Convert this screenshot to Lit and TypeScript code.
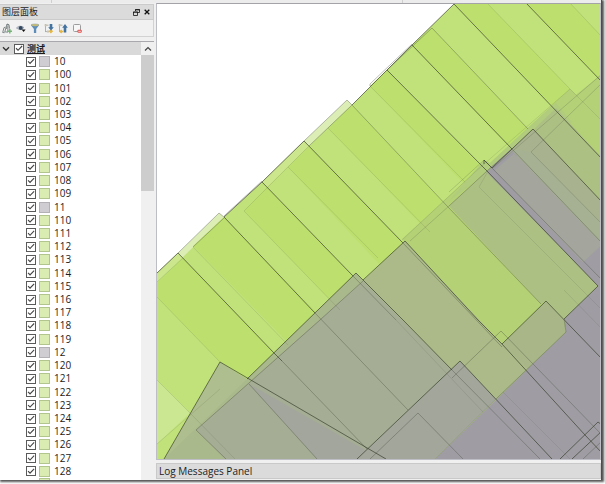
import { LitElement, html, css, svg } from "lit";
import { customElement } from "lit/decorators.js";

const range = (from: number, to: number) =>
  Array.from({ length: to - from + 1 }, (_, i) => String(from + i));

const LAYERS = ["10", ...range(100, 109), "11", ...range(110, 119), "12", ...range(120, 128)];
const isGrey = (name: string) => name.length === 2;

@customElement("layer-panel")
export class LayerPanel extends LitElement {
  static styles = css`
    :host { display: flex; flex-direction: column; min-height: 0; color: #1c1c1c; }
    * { box-sizing: border-box; }
    button { border: 0; padding: 0; margin: 0; background: none; display: flex; color: inherit; }
    svg { display: block; }
    .title {
      display: flex; align-items: center; gap: 4px; height: 16px; padding: 0 3px 0 2px;
      background: #dbdbdb; border: 1px solid #cbcbcb; border-left: 0;
    }
    h2 { margin: 0; flex: 1; font-size: 9px; line-height: 14px; font-weight: 400; }
    .tools {
      display: flex; align-items: center; gap: 4px; height: 17px; padding: 0 2px;
      background: #f1f1f1; border: 1px solid #d2d2d2; border-width: 0 1px 1px 0; margin-bottom: 4px;
    }
    .tree { display: flex; flex: 1; min-height: 0; background: #fff; border-top: 1px solid #a9a9ad; }
    .items { flex: 1; display: flex; flex-direction: column; min-width: 0; }
    .group { display: flex; align-items: center; gap: 4px; height: 13px; padding-left: 2px; background: #d9d9d9; flex: none; }
    .group label { display: flex; align-items: center; gap: 3px; font-size: 9px; line-height: 13px; font-weight: 700; text-decoration: underline; }
    ul { flex: 1; margin: 0; padding: 0; list-style: none; display: flex; flex-direction: column; overflow: hidden; }
    li { flex: 1 0 13px; padding-left: 26px; display: flex; align-items: center; }
    li label { display: flex; align-items: center; font-size: 10px; line-height: 13px; }
    .next { flex: 0 0 2px; align-items: flex-start; overflow: hidden; padding-left: 39px; }
    input {
      appearance: none; margin: 0; width: 10px; height: 10px; flex: none;
      border: 1px solid #5a5a5a; background: #fff; display: grid;
    }
    input:checked::after {
      content: ""; background: #444;
      clip-path: polygon(8% 52%, 18% 42%, 38% 62%, 84% 14%, 94% 24%, 38% 82%);
    }
    .swatch { width: 11px; height: 11px; margin: 0 4px 0 3px; border: 1px solid #b3c58e; background: #dbecb2; flex: none; }
    .swatch.grey { border-color: #b3b1b6; background: #cfcdd2; }
    .next .swatch { margin: 0; }
    .scroll { width: 13px; background: #f0f0f0; display: flex; flex-direction: column; align-items: stretch; }
    .scroll button { height: 13px; align-items: center; justify-content: center; flex: none; }
    .thumb { height: 31%; background: #cdcdcd; }
  `;

  render() {
    return html`
      <div class="title">
        <h2>图层面板</h2>
        <button aria-label="Float">
          <svg width="7" height="7" viewBox="0 0 7 7" fill="none" stroke="#111" stroke-width=".8"><path d="M2.5 2V.5h4v3H5M2 .9h5M.5 3h4v3.5h-4zM0 3.2h5"/></svg>
        </button>
        <button aria-label="Close">
          <svg width="6" height="6" viewBox="0 0 6 6" stroke="#111" stroke-width="1.3"><path d="M.7.7l4.6 4.6M5.3.7L.7 5.3"/></svg>
        </button>
      </div>
      <div class="tools">
        <button aria-label="Add group">
          <svg width="10" height="11" viewBox="0 0 10 11" fill="none"><path d="M.7 9.5L2 4.6l1.3-.4M5 1L2.8 8.8l3 .4L6 2.4 5 1l2 .7.6 4M.7 9.5l2 .2M5 3.4L4.6 6" stroke="#747c7c" stroke-width=".9"/><path d="M7.8 6v4.4M5.6 8.2H10" stroke="#79b27a" stroke-width="1.5"/></svg>
        </button>
        <button aria-label="Visibility">
          <svg width="10" height="11" viewBox="0 0 10 11"><path d="M.4 5Q3.4 1.6 8 4.5 4.8 8.4.4 5z" fill="#b9c4d0" stroke="#88919c" stroke-width=".6"/><circle cx="4.7" cy="5" r="2" fill="#33485f"/><path d="M5.6 6.6h4L7.6 9z" fill="#111"/></svg>
        </button>
        <button aria-label="Filter">
          <svg width="10" height="11" viewBox="0 0 10 11"><path d="M1 2.2h8L6.2 6v4H3.9V6z" fill="#5d8eb9"/><ellipse cx="5" cy="2.1" rx="4" ry="1.1" fill="#d7c36c" stroke="#7893a0" stroke-width=".5"/></svg>
        </button>
        <button aria-label="Expand all">
          <svg width="10" height="11" viewBox="0 0 10 11"><path d="M1.5 1v8M1.5 2.2h3M1.5 8.6h3" stroke="#a0a0a0" stroke-width=".8" fill="none"/><path d="M.6 1.2h2v2h-2zM3 7.6h2v2H3z" fill="#c9c4ad"/><path d="M6.9 6l2.2 2.3-2.2 2.2-2.2-2.2z" fill="#e5b743"/><path d="M5.7 1h2.6v3.3h1.5L7 7.5 4.2 4.3h1.5z" fill="#42729f"/></svg>
        </button>
        <button aria-label="Collapse all">
          <svg width="10" height="11" viewBox="0 0 10 11"><path d="M1.5 1v8M1.5 2.2h3M1.5 8.6h3" stroke="#a0a0a0" stroke-width=".8" fill="none"/><path d="M.6 1.2h2v2h-2z" fill="#c9c4ad"/><path d="M3.2 6.5l2 2-2 2-2-2z" fill="#e5b743"/><path d="M5.7 9.6h2.6V4.8h1.5L7 1 4.2 4.8h1.5z" fill="#42729f"/></svg>
        </button>
        <button aria-label="Remove layer">
          <svg width="10" height="11" viewBox="0 0 10 11"><rect x="1.5" y="1.5" width="7" height="7" rx="1" fill="#f7f7f7" stroke="#9c9c9c"/><rect x="5.4" y="6.8" width="4.4" height="3" rx="1" fill="#e25555"/><path d="M6.3 8.3h2.6" stroke="#fff" stroke-width=".7"/></svg>
        </button>
      </div>
      <div class="tree">
        <div class="items">
          <div class="group">
            <button aria-label="Collapse group">
              <svg width="8" height="6" viewBox="0 0 8 6" fill="none" stroke="#333" stroke-width="1.3"><path d="M1 1.3l3 3 3-3"/></svg>
            </button>
            <label><input type="checkbox" checked />测试</label>
          </div>
          <ul>
            ${LAYERS.map(
              (name) => html`<li>
                <label><input type="checkbox" checked /><span class="swatch ${isGrey(name) ? "grey" : ""}"></span>${name}</label>
              </li>`
            )}
            <li class="next"><span class="swatch"></span></li>
          </ul>
        </div>
        <div class="scroll">
          <button aria-label="Scroll up">
            <svg width="8" height="6" viewBox="0 0 8 6" fill="none" stroke="#444" stroke-width="1.2"><path d="M1 4.5l3-3 3 3"/></svg>
          </button>
          <div class="thumb"></div>
        </div>
      </div>
    `;
  }
}

// [fill, points], painted in order, in map-view coordinates.
const AREAS: [string, string][] = [
  ["#c1e27a", "157,273 178,253 224,217 262,182 304,141 352,105 387,70 412,45 454,4 454,3 602,3 602,459 157,459"],
  ["#dcedb6", "178,253 219,213 224,217 182,258"],
  ["#dcedb6", "304,141 347,100 352,105 309,146"],
  ["#cbe68d", "157,273 178,253 182,258 157,282"],
  ["#cbe68d", "262,182 304,141 309,146 267,187"],
  // darker overlap bands
  ["#bcdf6e", "157,283 183,258 300,379 248,400 220,362 157,297"],
  ["#bcdf6e", "193,246 224,217 340,337 312,367"],
  ["#bcdf6e", "244,211 267,187 362,285 340,310"],
  ["#bcdf6e", "288,167 309,146 403,243 380,265"],
  ["#bcdf6e", "328,128 352,105 452,211 430,234"],
  ["#bcdf6e", "370,86 387,70 487,173 470,190"],
  ["#bcdf6e", "412,45 432,28 532,133 513,151"],
  ["#bcdf6e", "454,4 487,3 575,94 556,110"],
  ["#bcdf6e", "526,3 570,3 602,37 602,82"],
  ["#cbe791", "157,380 190,413 157,444"],
  // green and grey overlaps
  ["#b4d175", "402,239 475,172 484,160 490,163 570,89 576,95 602,74 602,301 546,301 502,344"],
  ["#b0cc7c", "449,201 484,160 490,163 556,102 575,120 487,173"],
  ["#b4d178", "555,102 570,89 576,95 602,74 602,157"],
  ["#adc084", "449,206 487,171 512,150 556,108 602,158 602,290 564,319 546,301 541,304"],
  ["#a8b28f", "486,172 533,129 602,202 602,290"],
  ["#a6b193", "511,149 531,152 602,224 602,244"],
  ["#a4a69d", "490,168 511,149 602,244 583,262"],
  ["#9f9da3", "487,172 493,167 513,152 517,156 495,171 583,262 602,244 602,459 435,459 496,399 566,332 564,319 598,286"],
  ["#a4a69d", "495,170 514,154 602,244 583,262"],
  ["#a9b788", "546,301 564,319 566,332 496,399 452,378 501,345"],
  ["#abba88", "405,241 502,344 528,369 435,459 300,459 300,340"],
  ["#afbe8e", "164,459 220,362 247,379 386,459"],
  ["#aab98b", "356,273 452,370 386,459 164,459 247,379"],
  ["#a5ad94", "363,281 452,370 386,459 225,459 196,430"],
  ["#a3a69c", "249,384 381,459 317,459"],
  ["#a2a69b", "460,361 496,399 435,459 357,459"],
];

const DARK = "rgba(48,54,38,.64)";
const MID = "rgba(70,76,60,.36)";
const SOFT = "rgba(80,88,66,.24)";
const FAINT = "rgba(80,88,66,.15)";

// [stroke, points]
const EDGES: [string, string][] = [
  [DARK, "157,273 178,253 274,353"],
  [DARK, "274,353 282,361"],
  [MID, "282,361 367,449"],
  [MID, "178,253 219,213 224,217"],
  [DARK, "224,217 315,313"],
  [DARK, "224,217 262,182 353,276"],
  [MID, "224,216 262,181"],
  [DARK, "262,182 304,141 403,243"],
  [MID, "304,141 347,100 352,105 448,207 541,304"],
  [MID, "309,146 352,105"],
  [DARK, "352,105 387,70 487,171 598,286 564,319"],
  [DARK, "387,70 412,45 512,149"],
  [MID, "370,86 370,84 412,44"],
  [MID, "387,70 432,28 528,129"],
  [MID, "512,149 602,243"],
  [DARK, "412,45 454,4 602,159"],
  [DARK, "526,3 602,82"],
  [FAINT, "487,3 570,89 602,121"],
  [FAINT, "570,3 602,37"],
  [FAINT, "157,282 183,258"],
  [MID, "193,247 224,218"],
  [FAINT, "193,247 288,345"],
  [FAINT, "157,297 220,362"],
  [FAINT, "157,380 190,413 235,459"],
  [FAINT, "157,444 220,389"],
  [FAINT, "340,310 244,211 309,146"],
  [FAINT, "288,167 378,258"],
  [FAINT, "328,128 430,232"],
  [FAINT, "370,86 465,182"],
  [FAINT, "570,89 475,172 402,240"],
  [SOFT, "602,74 493,168"],
  [SOFT, "602,83 531,152 602,224"],
  [MID, "602,280 492,168 484,160"],
  [SOFT, "410,241 449,206"],
  [MID, "449,206 487,171 512,149"],
  [SOFT, "449,192 484,160"],
  [DARK, "484,164 484,160 492,168 533,129 602,202"],
  [DARK, "247,379 356,273 403,320 452,370"],
  [MID, "452,370 540,459"],
  [MID, "226,459 196,430 320,320 363,281"],
  [DARK, "363,280 405,241 478,320 502,344 585,435 602,453"],
  [MID, "403,243 502,347"],
  [FAINT, "487,173 479,187 602,310"],
  [FAINT, "564,290 602,329"],
  [MID, "452,378 501,331 602,435"],
  [DARK, "502,344 546,301 602,359"],
  [MID, "564,319 566,332 496,399"],
  [FAINT, "496,399 435,459"],
  [DARK, "164,459 220,362 386,459"],
  [MID, "249,384 317,459"],
  [FAINT, "503,392 570,459"],
  [DARK, "357,459 460,361 552,459"],
  [MID, "370,459 418,413 463,459"],
  [DARK, "560,459 598,422 602,425"],
  [DARK, "572,459 602,431"],
  [MID, "583,459 602,441"],
  [MID, "315,313 408,410"],
  [MID, "353,276 396,320"],
  [FAINT, "396,320 483,412"],
];

@customElement("map-canvas")
export class MapCanvas extends LitElement {
  static styles = css`
    :host { display: block; min-height: 0; overflow: hidden; background: #fff; border: 1px solid #bdbdc5; border-top-color: #a4a4a8; }
    svg { display: block; width: 100%; height: 100%; }
  `;

  render() {
    return html`<svg viewBox="157 4 444 455" preserveAspectRatio="xMinYMin slice" role="img" aria-label="Map">
      ${AREAS.map(([fill, points]) => svg`<polygon fill=${fill} points=${points} />`)}
      ${EDGES.map(([stroke, points]) => svg`<polyline fill="none" stroke=${stroke} points=${points} />`)}
    </svg>`;
  }
}

@customElement("app-root")
export class AppRoot extends LitElement {
  static styles = css`
    :host {
      display: block; box-sizing: border-box; height: 100vh; padding: 0 3px 4px 0; overflow: hidden;
      background: #fff; font-family: "Open Sans", "Noto Sans CJK SC", sans-serif; color: #1c1c1c;
    }
    .window {
      height: 100%; box-sizing: border-box; display: flex; flex-direction: column; background: #f0f0f0;
      border-right: 1px solid #4c4c4c; box-shadow: 1px 1px 2px 1px #555;
    }
    .strip { height: 3px; flex: none; display: grid; grid-template-columns: 52px 351px 1fr; background: #ececec; }
    .strip span { border-right: 1px solid #cfcfcf; }
    .body { flex: 1; min-height: 0; display: grid; grid-template-columns: 154px 1fr; column-gap: 2px; }
    layer-panel { padding-top: 1px; }
    .main { display: flex; flex-direction: column; min-width: 0; min-height: 0; }
    map-canvas { flex: 1; }
    footer {
      margin: 3px 0 1px; padding: 0 2px; height: 16px; box-sizing: border-box; flex: none;
      font-size: 10px; line-height: 15px; background: #dbdbdb; border: 1px solid #c9c9c9;
    }
  `;

  render() {
    return html`<div class="window">
      <div class="strip"><span></span><span></span></div>
      <div class="body">
        <layer-panel></layer-panel>
        <div class="main">
          <map-canvas></map-canvas>
          <footer>Log Messages Panel</footer>
        </div>
      </div>
    </div>`;
  }
}
